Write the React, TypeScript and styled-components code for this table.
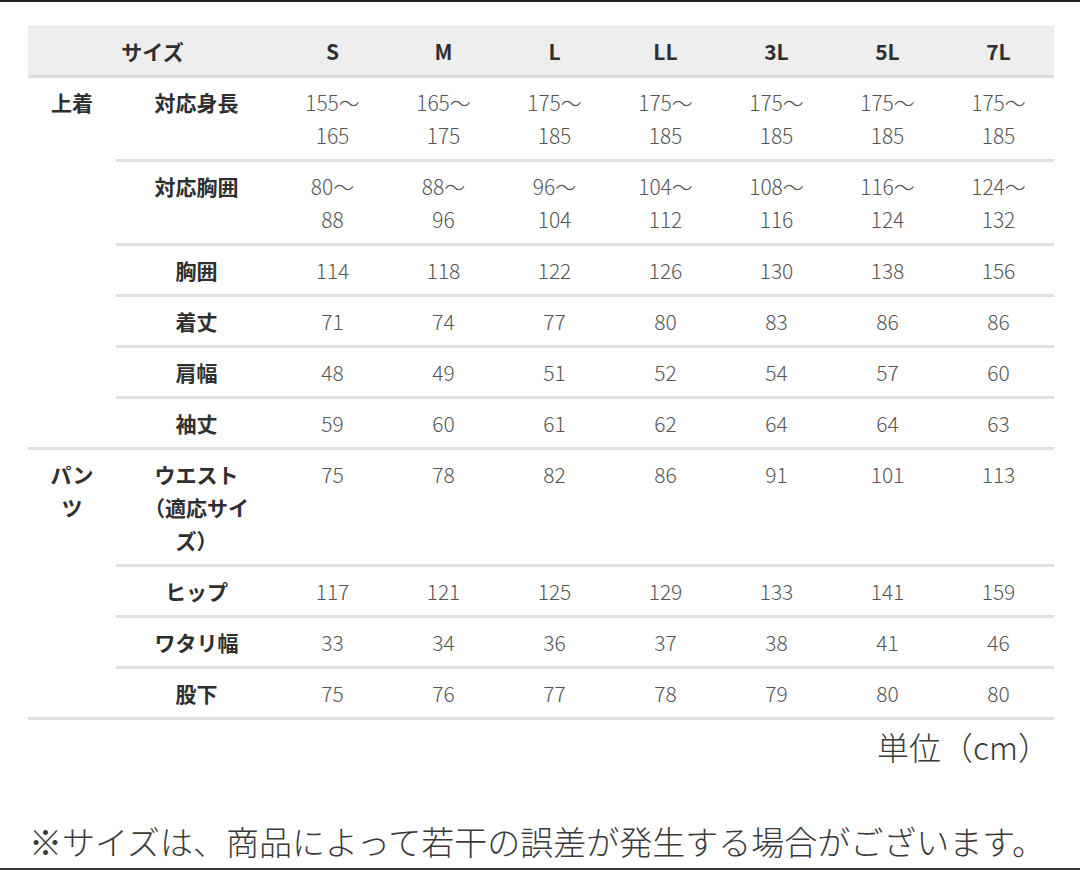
import React from 'react';
import styled, { createGlobalStyle } from 'styled-components';

const GlobalStyle = createGlobalStyle`
  html, body {
    margin: 0;
    padding: 0;
    background: #fff;
  }
  body {
    font-family: "Noto Sans CJK JP", "Noto Sans", sans-serif;
  }
`;

const Page = styled.div`
  width: 1080px;
  height: 870px;
  box-sizing: border-box;
  border-top: 2px solid #1e1e1e;
  border-bottom: 2px solid #3a3a3a;
  padding: 24px 28px 0;
  display: flex;
  flex-direction: column;
  overflow: hidden;
`;

const Table = styled.table`
  width: 1025px;
  border-collapse: collapse;
  table-layout: fixed;
`;

const HeadRow = styled.tr`
  background: #eeeeee;
  border-top: 1px solid #e4e4e4;
  border-bottom: 3px solid #dcdcdc;
`;

const HeadCell = styled.th`
  padding: 8px 0 7px;
  line-height: 33px;
  font-size: 21px;
  font-weight: 700;
  color: #2f2f2f;
  text-align: center;
`;

const Row = styled.tr``;

const GroupCell = styled.td`
  padding: 8px 0 7px;
  line-height: 33px;
  font-size: 21px;
  font-weight: 700;
  color: #2f2f2f;
  text-align: center;
  vertical-align: top;
  border-bottom: 3px solid #e0e0e0;
`;

const LabelCell = styled.td`
  padding: 8px 0 7px;
  line-height: 33px;
  font-size: 21px;
  font-weight: 700;
  color: #2f2f2f;
  text-align: center;
  vertical-align: top;
  border-bottom: 3px solid #e0e0e0;
`;

const ValueCell = styled.td`
  padding: 8px 0 7px;
  line-height: 33px;
  font-size: 21px;
  font-weight: 300;
  color: #555;
  text-align: center;
  vertical-align: top;
  border-bottom: 3px solid #e0e0e0;
`;

const Unit = styled.div`
  width: 1025px;
  text-align: right;
  padding-right: 3px;
  box-sizing: border-box;
  margin-top: 6px;
  font-size: 32px;
  line-height: 40px;
  font-weight: 300;
  color: #3a3a3a;
`;

const Note = styled.div`
  margin-top: 55px;
  margin-left: 1px;
  font-size: 33px;
  line-height: 40px;
  font-weight: 300;
  color: #3a3a3a;
  white-space: nowrap;
`;

const sizes = ['S', 'M', 'L', 'LL', '3L', '5L', '7L'];

type Line = string[];
type RowData = { label: Line; values: Line[] };

const range = (a: number[], b: number[]): Line[] => a.map((v, i) => [`${v}〜`, `${b[i]}`]);
const single = (a: number[]): Line[] => a.map(v => [`${v}`]);

const topRows: RowData[] = [
  { label: ['対応身長'], values: range([155, 165, 175, 175, 175, 175, 175], [165, 175, 185, 185, 185, 185, 185]) },
  { label: ['対応胸囲'], values: range([80, 88, 96, 104, 108, 116, 124], [88, 96, 104, 112, 116, 124, 132]) },
  { label: ['胸囲'], values: single([114, 118, 122, 126, 130, 138, 156]) },
  { label: ['着丈'], values: single([71, 74, 77, 80, 83, 86, 86]) },
  { label: ['肩幅'], values: single([48, 49, 51, 52, 54, 57, 60]) },
  { label: ['袖丈'], values: single([59, 60, 61, 62, 64, 64, 63]) },
];

const pantsRows: RowData[] = [
  { label: ['ウエスト', '（適応サイ', 'ズ）'], values: single([75, 78, 82, 86, 91, 101, 113]) },
  { label: ['ヒップ'], values: single([117, 121, 125, 129, 133, 141, 159]) },
  { label: ['ワタリ幅'], values: single([33, 34, 36, 37, 38, 41, 46]) },
  { label: ['股下'], values: single([75, 76, 77, 78, 79, 80, 80]) },
];

const Lines: React.FC<{ lines: Line }> = ({ lines }) => (
  <>
    {lines.map((l, i) => (
      <React.Fragment key={i}>
        {i > 0 && <br />}
        {l}
      </React.Fragment>
    ))}
  </>
);

const Group: React.FC<{ name: Line; rows: RowData[] }> = ({ name, rows }) => (
  <>
    {rows.map((r, i) => (
      <Row key={i}>
        {i === 0 && (
          <GroupCell rowSpan={rows.length}>
            <Lines lines={name} />
          </GroupCell>
        )}
        <LabelCell>
          <Lines lines={r.label} />
        </LabelCell>
        {r.values.map((v, j) => (
          <ValueCell key={j}>
            <Lines lines={v} />
          </ValueCell>
        ))}
      </Row>
    ))}
  </>
);

export default function App() {
  return (
    <>
      <GlobalStyle />
      <Page>
        <Table>
          <colgroup>
            <col style={{ width: 88 }} />
            <col style={{ width: 161 }} />
            {sizes.map(s => (
              <col key={s} style={{ width: 111 }} />
            ))}
          </colgroup>
          <thead>
            <HeadRow>
              <HeadCell colSpan={2}>サイズ</HeadCell>
              {sizes.map(s => (
                <HeadCell key={s}>{s}</HeadCell>
              ))}
            </HeadRow>
          </thead>
          <tbody>
            <Group name={['上着']} rows={topRows} />
            <Group name={['パン', 'ツ']} rows={pantsRows} />
          </tbody>
        </Table>
        <Unit>単位（cm）</Unit>
        <Note>※サイズは、商品によって若干の誤差が発生する場合がございます。</Note>
      </Page>
    </>
  );
}
